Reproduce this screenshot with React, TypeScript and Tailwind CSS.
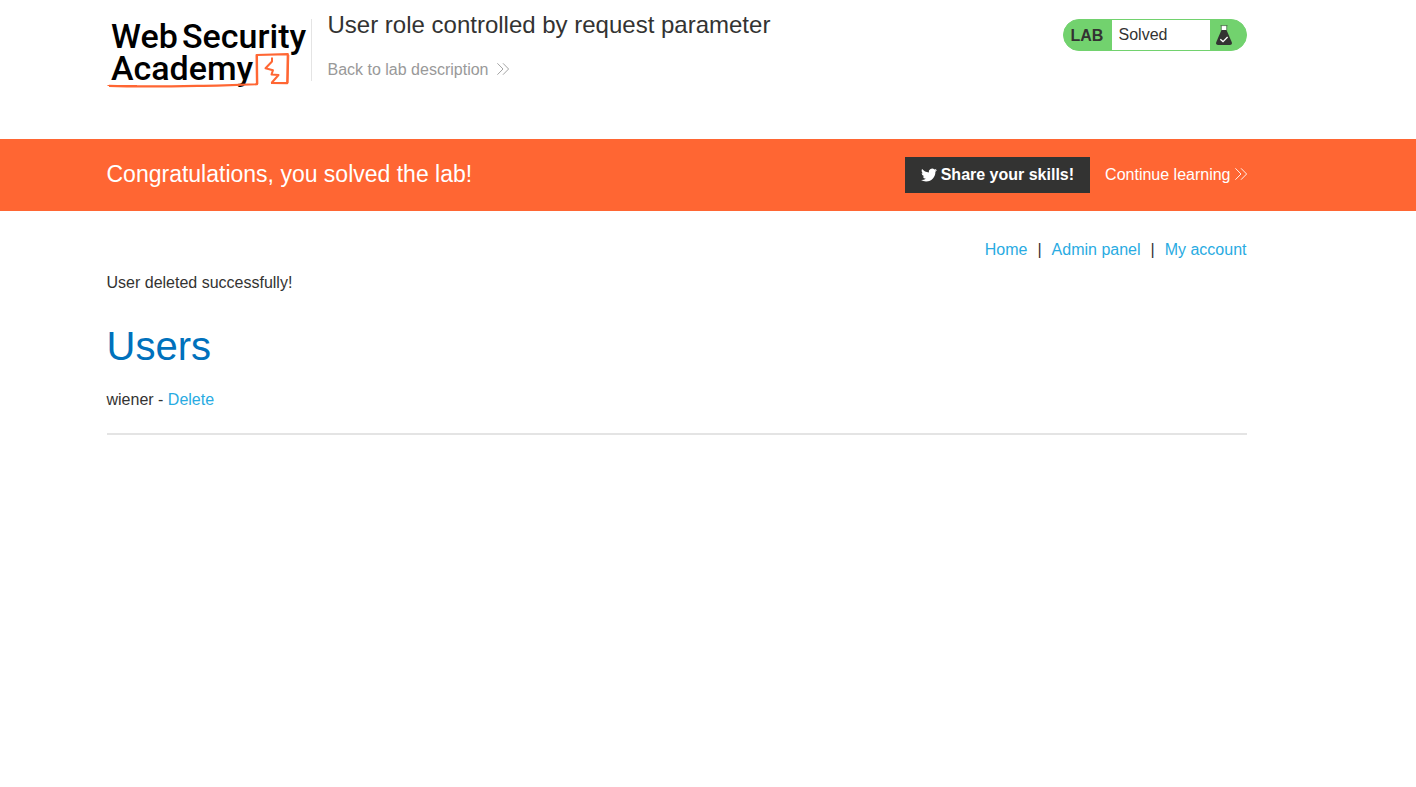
import type { ReactNode } from "react";

function Container({ children, className = "" }: { children: ReactNode; className?: string }) {
  return (
    <div className="pr-[63px]">
      <div className={`mx-auto max-w-[1140px] ${className}`}>{children}</div>
    </div>
  );
}

function Logo() {
  return (
    <svg
      viewBox="0 0 201 72"
      className="block h-[72px] w-[201px] overflow-visible"
      role="img"
      aria-label="Web Security Academy"
    >
      <g fontFamily="Roboto, 'Liberation Sans', sans-serif" fontSize="34" fontWeight="500" fill="#000">
        <text x="4" y="30">Web</text>
        <text x="75" y="30">Security</text>
        <text x="4" y="62">Academy</text>
      </g>
      <g fill="none" stroke="#ff6633" strokeLinejoin="round">
        <path strokeWidth="2.2" d="M2 67.8 C40 69.3 80 68 110 67.6 L150 66.2 L149.600 37 L180.800 36.200 L180.200 65.200 L164 65" />
        <path strokeWidth="2" d="M165 39.500 L165 43.500 L158.500 50.300 L166 52.200 L164.500 56.500 L171.500 57 L164.500 65" />
        <path strokeWidth="1" d="M0.500 67.500 H30 M150.800 66 L150.500 38 M181.800 37 L181 65" />
      </g>
    </svg>
  );
}

function DoubleChevron() {
  return (
    <svg viewBox="0 0 12 12" className="mb-0.5 h-3 w-3" fill="none" stroke="currentColor" aria-hidden="true">
      <path strokeWidth="0.9" d="M0.400 0.300 L6 6 L0.400 11.700 M6 0.300 L11.600 6 L6 11.700" />
    </svg>
  );
}

function Twitter() {
  return (
    <svg viewBox="0 0 24 24" className="h-4 w-4" fill="currentColor" aria-hidden="true">
      <path d="M23.953 4.57a10 10 0 01-2.825.775 4.958 4.958 0 002.163-2.723c-.951.555-2.005.959-3.127 1.184a4.92 4.92 0 00-8.384 4.482C7.69 8.095 4.067 6.13 1.64 3.162a4.822 4.822 0 00-.666 2.475c0 1.71.87 3.213 2.188 4.096a4.904 4.904 0 01-2.228-.616v.06a4.923 4.923 0 003.946 4.827 4.996 4.996 0 01-2.212.085 4.936 4.936 0 004.604 3.417 9.867 9.867 0 01-6.102 2.105c-.39 0-.779-.023-1.17-.067a13.995 13.995 0 007.557 2.209c9.053 0 13.998-7.496 13.998-13.985 0-.21 0-.42-.015-.63A9.935 9.935 0 0024 4.59z" />
    </svg>
  );
}

function Flask() {
  return (
    <svg viewBox="0 0 16 20" className="h-5 w-4" aria-hidden="true">
      <path fill="#fff" d="M5.500 0.800 H10.500 V5.500 H5.500 Z" />
      <path fill="#333332" d="M5.500 5 H10.500 L15.800 17.300 Q16.300 20 14 20 H2 Q-0.300 20 0.200 17.300 Z" />
      <path fill="none" stroke="#333332" strokeWidth="0.500" d="M4.500 0.600 H11.500 M5.300 0.600 V5.500 M10.700 0.600 V5.500" />
      <path fill="none" stroke="#fff" strokeWidth="1.300" d="M4.300 14.200 L7 16.600 L11.600 12" />
    </svg>
  );
}

function LabStatus() {
  return (
    <div className="flex h-8 w-46 shrink-0 overflow-hidden rounded-2xl border border-[#72d26e] bg-[#72d26e]">
      <span className="flex w-12 items-center pl-[7px] pt-0.5 font-bold">LAB</span>
      <span className="flex-1 bg-white pl-[7px] leading-[30px]">Solved</span>
      <span className="flex w-9 items-center pl-1.5">
        <Flask />
      </span>
    </div>
  );
}

export default function App() {
  return (
    <div className="bg-white font-['Liberation_Sans',Arial,sans-serif] text-base text-[#333332]">
      <header>
        <Container className="flex h-[139px] items-start">
          <div className="flex min-w-0 flex-1 items-start">
            <a href="#academy" className="shrink-0 pt-[18px]">
              <Logo />
            </a>
            <div className="mt-[19px] ml-[3px] h-[62px] w-px shrink-0 bg-[#e4e4e4]" />
            <div className="ml-4 pt-[9px]">
              <h1 className="text-2xl leading-8">User role controlled by request parameter</h1>
              <a href="#lab" className="mt-[17px] flex items-center gap-[9px] leading-6 text-[#999]">
                Back to lab description
                <DoubleChevron />
              </a>
            </div>
          </div>
          <div className="pt-[19px]">
            <LabStatus />
          </div>
        </Container>
      </header>

      <section className="bg-[#ff6633] text-white">
        <Container className="flex h-18 items-center justify-between">
          <h2 className="pb-0.5 text-[23px] leading-8">Congratulations, you solved the lab!</h2>
          <div className="flex items-center gap-[15px]">
            <button type="button" className="flex h-9 items-center gap-1 bg-[#333332] px-4 font-bold">
              <Twitter />
              Share your skills!
            </button>
            <a href="#continue" className="flex items-center gap-1">
              Continue learning
              <DoubleChevron />
            </a>
          </div>
        </Container>
      </section>

      <main>
        <Container>
          <nav className="flex justify-end gap-2.5 pt-[27px] leading-6">
            <a href="#home" className="text-[#29abe2]">Home</a>
            <span>|</span>
            <a href="#admin" className="text-[#29abe2]">Admin panel</a>
            <span>|</span>
            <a href="#account" className="text-[#29abe2]">My account</a>
          </nav>
          <p className="mt-[9px] leading-6">User deleted successfully!</p>
          <h2 className="mt-[27px] text-[40px] leading-12 text-[#0071bc]">Users</h2>
          <p className="mt-[18px] leading-6">
            wiener - <a href="#delete" className="text-[#29abe2]">Delete</a>
          </p>
          <hr className="mt-[21px] border-t-2 border-[#e4e4e4]" />
        </Container>
      </main>
    </div>
  );
}
